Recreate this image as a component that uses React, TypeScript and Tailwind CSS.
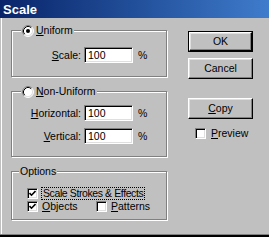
import type { ReactNode } from "react";

function Radio({ checked }: { checked?: boolean }) {
  return (
    <svg width="12" height="12" viewBox="0 0 12 12" className="shrink-0">
      <circle cx="6" cy="6" r="5" fill="#fff" />
      <path d="M2.11 9.89 A5.5 5.5 0 0 1 9.89 2.11" fill="none" stroke="#808080" />
      <path d="M9.89 2.11 A5.5 5.5 0 0 1 2.11 9.89" fill="none" stroke="#fff" />
      <path d="M2.82 9.18 A4.5 4.5 0 0 1 9.18 2.82" fill="none" stroke="#000" />
      <path d="M9.18 2.82 A4.5 4.5 0 0 1 2.82 9.18" fill="none" stroke="#dfdfdf" />
      {checked && <circle cx="6" cy="6" r="2" fill="#000" />}
    </svg>
  );
}

function Check({ checked }: { checked?: boolean }) {
  return (
    <div className="w-[11px] h-[11px] shrink-0 bg-white border border-t-[#808080] border-l-[#808080] border-b-white border-r-white shadow-[inset_1px_1px_0_#000,inset_-1px_-1px_0_#dfdfdf] flex items-center justify-center">
      {checked && (
        <svg width="7" height="7" viewBox="0 0 7 7">
          <path d="M0.5 3 L2.5 5.2 L6.5 1" fill="none" stroke="#000" strokeWidth="1.6" />
        </svg>
      )}
    </div>
  );
}

function Group({ h, mt, children }: { h: string; mt: string; children: ReactNode }) {
  return (
    <div
      className={`w-[156px] ${h} ${mt} flex flex-col border border-[#808080] shadow-[inset_1px_1px_0_#fff,1px_1px_0_#fff]`}
    >
      {children}
    </div>
  );
}

function Legend({ children, ml }: { children: ReactNode; ml: string }) {
  return (
    <div className={`-mt-[7px] ${ml} self-start bg-[#c0c0c0] px-[1px] h-[13px] flex items-center gap-[2px]`}>
      {children}
    </div>
  );
}

function Field({ label, mt }: { label: ReactNode; mt: string }) {
  return (
    <div className={`${mt} flex items-center h-[16px]`}>
      <div className="w-[69px] text-right">{label}</div>
      <div className="ml-[3px] w-[49px] h-[16px] bg-white border border-t-[#808080] border-l-[#808080] border-b-white border-r-white shadow-[inset_1px_1px_0_#000,inset_-1px_-1px_0_#dfdfdf] flex items-center pl-[3px]">
        100
      </div>
      <div className="ml-[5px]">%</div>
    </div>
  );
}

function Button({ children, mt, primary }: { children: ReactNode; mt: string; primary?: boolean }) {
  return (
    <div className={`${mt} w-[65px] h-[21px] flex ${primary ? "border border-black" : ""}`}>
      <div className="flex-1 flex items-center justify-center bg-[#c0c0c0] border border-t-white border-l-white border-b-black border-r-black shadow-[inset_-1px_-1px_0_#808080,inset_1px_1px_0_#dfdfdf]">
        {children}
      </div>
    </div>
  );
}

export default function App() {
  return (
    <div
      className="w-[269px] h-[237px] bg-[#c0c0c0] flex flex-col overflow-hidden text-black text-[10.5px] leading-none"
      style={{ fontFamily: '"Liberation Sans", Arial, sans-serif' }}
    >
      <div className="h-[18px] shrink-0 flex items-center pl-[3px] bg-linear-to-r from-[#0a246a] to-[#3f7ccc] text-white font-bold text-[13px]">
        Scale
      </div>

      <div className="flex-1 flex ml-[1px] border-l border-white pl-[9px] pt-[12px]">
        <div className="flex flex-col">
          <Group h="h-[47px]" mt="mt-0">
            <Legend ml="ml-[9px]">
              <Radio checked />
              <span>
                <span className="underline">U</span>niform
              </span>
            </Legend>
            <Field
              mt="mt-[10px]"
              label={
                <>
                  <span className="underline">S</span>cale:
                </>
              }
            />
          </Group>

          <Group h="h-[66px]" mt="mt-[14px]">
            <Legend ml="ml-[9px]">
              <Radio />
              <span>
                <span className="underline">N</span>on-Uniform
              </span>
            </Legend>
            <Field
              mt="mt-[7px]"
              label={
                <>
                  <span className="underline">H</span>orizontal:
                </>
              }
            />
            <Field
              mt="mt-[7px]"
              label={
                <>
                  <span className="underline">V</span>ertical:
                </>
              }
            />
          </Group>

          <Group h="h-[49px]" mt="mt-[14px]">
            <Legend ml="ml-[7px]">
              <span>Options</span>
            </Legend>
            <div className="mt-[9px] ml-[15px] h-[13px] flex items-center">
              <Check checked />
              <span className="ml-[3px] border border-dotted border-black px-[1px] h-[13px] flex items-center tracking-[-0.4px]">
                Scale Strokes &amp; Effects
              </span>
            </div>
            <div className="ml-[15px] h-[13px] flex items-center">
              <div className="w-[69px] flex items-center">
                <Check checked />
                <span className="ml-[4px]">
                  <span className="underline">O</span>bjects
                </span>
              </div>
              <Check />
              <span className="ml-[4px]">
                <span className="underline">P</span>atterns
              </span>
            </div>
          </Group>
        </div>

        <div className="ml-[21px] pt-[1px] flex flex-col">
          <Button mt="mt-0" primary>
            OK
          </Button>
          <Button mt="mt-[6px]">Cancel</Button>
          <Button mt="mt-[19px]">
            <span>
              <span className="underline">C</span>opy
            </span>
          </Button>
          <div className="mt-[9px] ml-[7px] flex items-center">
            <Check />
            <span className="ml-[5px]">
              <span className="underline">P</span>review
            </span>
          </div>
        </div>
      </div>

      <div className="h-[1px] shrink-0 bg-[#808080]" />
      <div className="h-[2px] shrink-0 bg-black" />
    </div>
  );
}
